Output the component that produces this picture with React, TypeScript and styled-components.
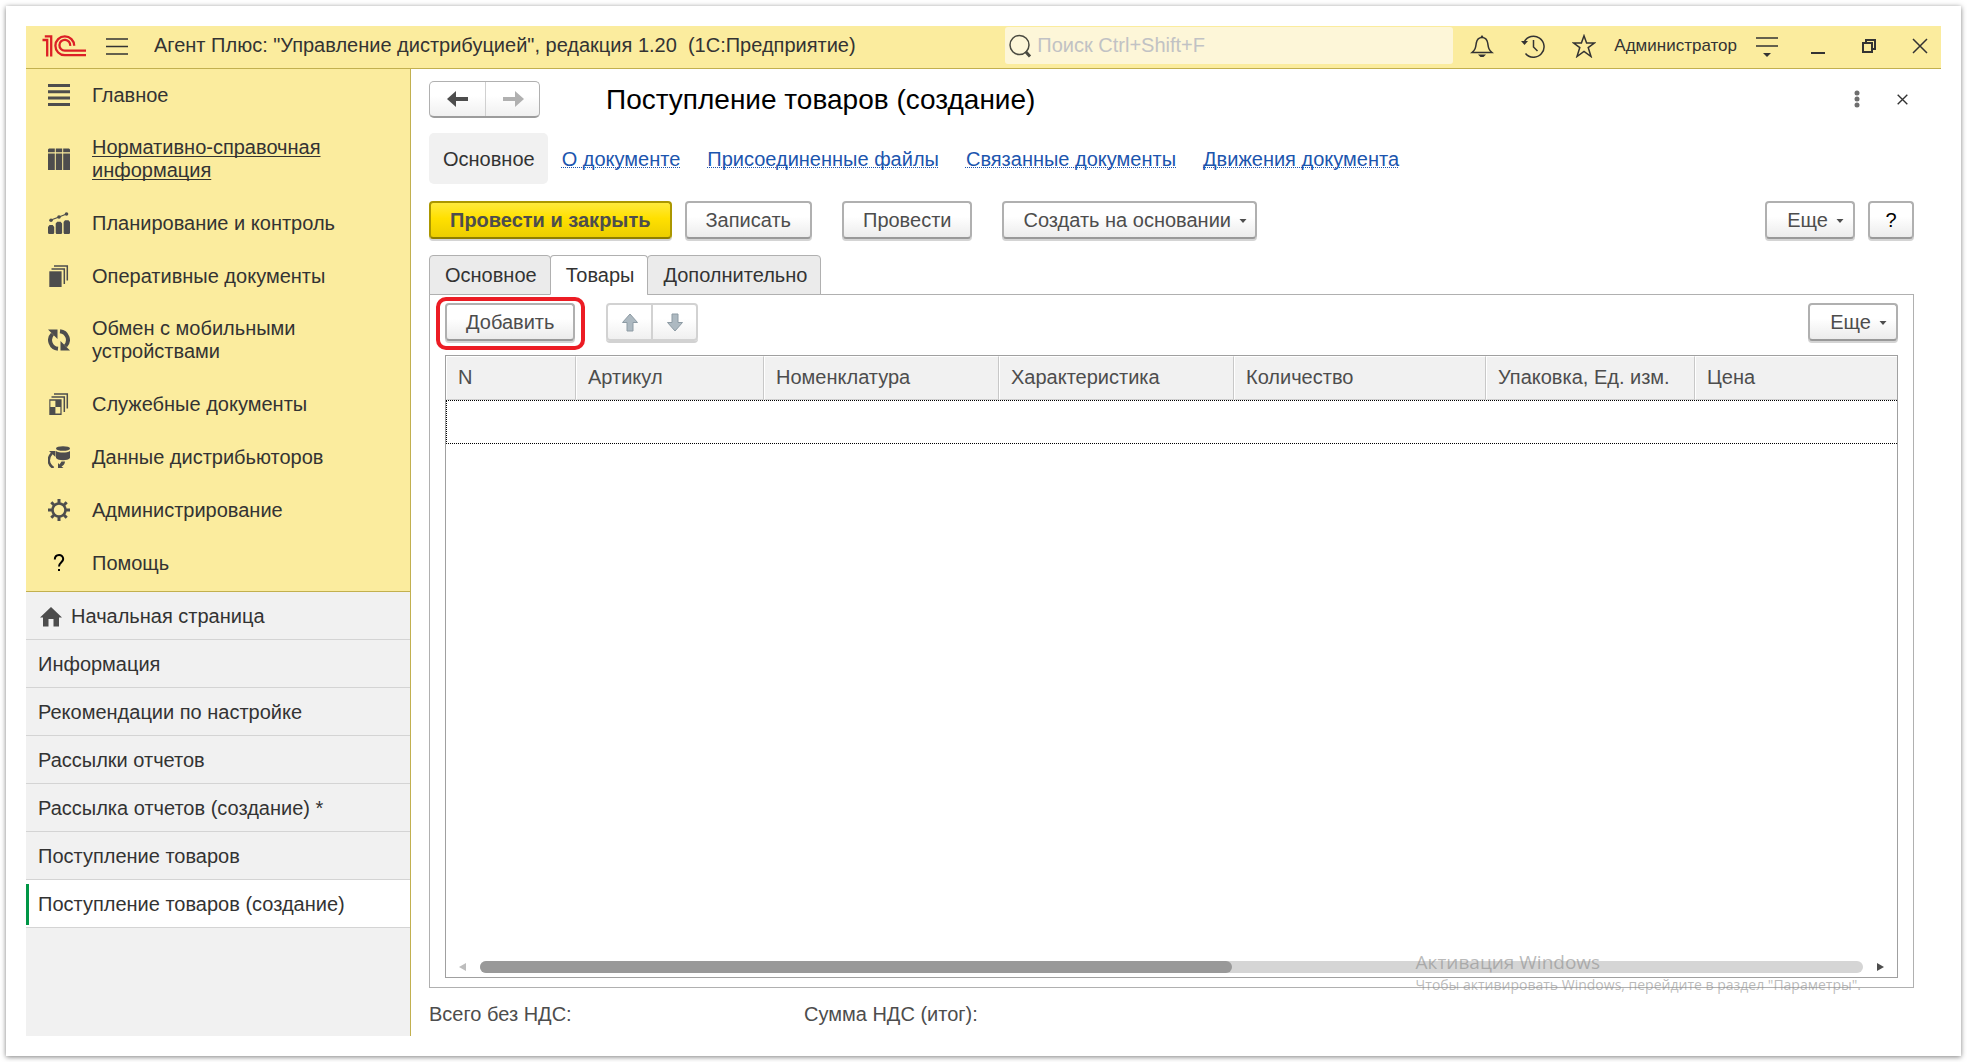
import React from "react";
import styled, { createGlobalStyle, css } from "styled-components";

const ink = "#333333";
const soft = "#4d4d4d";
const yellow = "#fbec9e";
const yellowLine = "#c2b04f";
const grey = "#f1f1f1";

const GlobalStyle = createGlobalStyle`
  *, *::before, *::after { box-sizing: border-box; }
  body {
    margin: 0;
    background: #fff;
    color: ${ink};
    font: 20px/23px "Liberation Sans", Arial, sans-serif;
  }
  button, input { font: inherit; color: inherit; }
  button { cursor: pointer; }
`;

const Page = styled.div`
  display: flex;
  min-height: 100vh;
  padding: 6px;
`;

const Sheet = styled.div`
  display: flex;
  flex: 1;
  flex-direction: column;
  min-width: 0;
  padding: 20px;
  background: #fff;
  box-shadow: 0 1px 5px rgba(0, 0, 0, 0.5);
`;

/* ---------- title bar ---------- */

const TitleBar = styled.header`
  display: flex;
  align-items: center;
  height: 43px;
  padding: 0 0 3px 16px;
  background: ${yellow};
  border-bottom: 1px solid ${yellowLine};
`;

const BarButton = styled.button`
  display: flex;
  align-items: center;
  justify-content: center;
  width: 42px;
  height: 38px;
  padding: 0;
  border: 0;
  background: none;
`;

const AppTitle = styled.div`
  flex: 1;
  min-width: 0;
  margin-left: 16px;
  overflow: hidden;
  white-space: nowrap;
  text-overflow: ellipsis;
`;

const Search = styled.label`
  display: flex;
  align-items: center;
  flex: 0 1 448px;
  height: 37px;
  padding-left: 4px;
  gap: 4px;
  border-radius: 3px;
  background: #fdf6d8;
`;

const SearchInput = styled.input`
  flex: 1;
  min-width: 0;
  padding: 0;
  border: 0;
  outline: 0;
  background: none;
  &::placeholder { color: #c1c2c4; opacity: 1; }
`;

const BarTools = styled.div`
  display: flex;
  align-items: center;
  gap: 9px;
  margin-left: 8px;
`;

const UserName = styled.span`
  font-size: 17px;
`;

/* ---------- side panel ---------- */

const Body = styled.div`
  display: flex;
  flex: 1;
`;

const Side = styled.aside`
  display: flex;
  flex: none;
  flex-direction: column;
  width: 385px;
  background: ${grey};
  border-right: 1px solid ${yellowLine};
`;

const Sections = styled.nav`
  padding-bottom: 1px;
  background: ${yellow};
  border-bottom: 1px solid ${yellowLine};
`;

const SectionLink = styled.a<{ $hovered?: boolean }>`
  display: flex;
  align-items: center;
  gap: 22px;
  min-height: 53px;
  padding: 14px 60px 15px 22px;
  color: ${ink};
  text-decoration: ${(p) => (p.$hovered ? "underline" : "none")};
  text-decoration-thickness: 1px;
  text-underline-offset: 2px;
  text-decoration-skip-ink: none;
  svg { flex: none; }
`;

const OpenWindow = styled.a<{ $active?: boolean; $home?: boolean }>`
  display: flex;
  align-items: center;
  height: 48px;
  gap: 9px;
  padding: 2px 0 0 ${(p) => (p.$home ? 14 : 12)}px;
  border-bottom: 1px solid #d4d4d4;
  color: ${ink};
  text-decoration: none;
  ${(p) =>
    p.$active &&
    css`
      padding-left: 0;
      background: #fff;
      &::before {
        content: "";
        width: 3px;
        height: 41px;
        background: #009646;
      }
    `}
`;

/* ---------- form ---------- */

const Form = styled.main`
  display: flex;
  flex: 1;
  flex-direction: column;
  min-width: 0;
  padding: 12px 27px 0 18px;
`;

const FormHead = styled.div`
  display: flex;
  align-items: center;
  height: 36px;
`;

const History = styled.div`
  display: flex;
  height: 37px;
  border: 1px solid #b0b0b0;
  border-bottom: 2px solid #9c9c9c;
  border-radius: 5px;
  background: linear-gradient(#fff 40%, #f0f0f0);
`;

const HistoryButton = styled.button`
  display: flex;
  align-items: center;
  justify-content: center;
  width: 55px;
  padding: 0;
  border: 0;
  background: none;
  & + & {
    width: 54px;
    border-left: 1px solid #d0d0d0;
  }
`;

const FormTitle = styled.h1`
  flex: 1;
  margin: 0 0 0 66px;
  padding-top: 2px;
  color: #000;
  font-size: 28px;
  line-height: 36px;
  font-weight: 400;
`;

const GhostButton = styled.button`
  display: flex;
  align-items: center;
  justify-content: center;
  width: 24px;
  height: 36px;
  padding: 0;
  border: 0;
  background: none;
`;

const HeadTools = styled.div`
  display: flex;
  gap: 21px;
`;

const Pages = styled.nav`
  display: flex;
  align-items: center;
  height: 51px;
  margin-top: 16px;
`;

const PageLink = styled.a<{ $current?: boolean }>`
  display: flex;
  align-items: center;
  height: 51px;
  padding: 2px 13px 0 14px;
  white-space: nowrap;
  ${(p) =>
    p.$current
      ? css`
          border-radius: 5px;
          background: ${grey};
          color: ${ink};
          text-decoration: none;
        `
      : css`
          color: #1c55ae;
          text-decoration: underline dotted 1px;
          text-underline-offset: 1px;
          text-decoration-skip-ink: none;
        `}
`;

const Commands = styled.div`
  display: flex;
  align-items: center;
  margin-top: 17px;
`;

const Gap = styled.div<{ $w: number }>`
  flex: 0 0 ${(p) => p.$w}px;
`;

const Spring = styled.div`
  flex: 1;
`;

const Button = styled.button<{ $primary?: boolean; $menu?: boolean; $narrow?: boolean }>`
  display: flex;
  align-items: center;
  justify-content: center;
  min-width: ${(p) => (p.$narrow ? 46 : 90)}px;
  height: 38px;
  gap: 8px;
  padding: ${(p) => (p.$narrow ? "0" : p.$menu ? "0 8px 0 19px" : "0 19px")};
  border: 2px solid #b0b0b0;
  border-bottom-color: #999;
  border-radius: 4px;
  background: linear-gradient(#fff 40%, #ececec);
  box-shadow: 0 2px 0 #d4d4d4;
  color: ${(p) => (p.$narrow ? "#000" : soft)};
  white-space: nowrap;
  ${(p) =>
    p.$primary &&
    css`
      border-color: #ab9700;
      border-bottom-color: #8f7e00;
      background: linear-gradient(#ffea3c, #ffe000 45%, #ecce00);
      font-weight: 700;
    `}
`;

const Tabs = styled.div`
  display: flex;
  margin-top: 16px;
`;

const Tab = styled.button<{ $active?: boolean }>`
  height: 40px;
  margin: 0 -1px -1px 0;
  padding: 0 13px 0 15px;
  border: 1px solid #b0b0b0;
  border-bottom-color: ${(p) => (p.$active ? "#fff" : "#b0b0b0")};
  border-radius: 4px 4px 0 0;
  background: ${(p) => (p.$active ? "#fff" : "#ebebeb")};
  color: ${ink};
  z-index: 1;
`;

const TabPanel = styled.section`
  display: flex;
  flex: 1;
  flex-direction: column;
  padding: 8px 15px 9px;
  border: 1px solid #b0b0b0;
`;

const ListBar = styled.div`
  display: flex;
  align-items: flex-start;
  height: 52px;
`;

const Marked = styled.div`
  position: relative;
  &::after {
    content: "";
    position: absolute;
    inset: -6px -10px -9px -9px;
    border: 4px solid #ec1c24;
    border-radius: 10px;
    pointer-events: none;
  }
`;

const MoveGroup = styled.div`
  display: flex;
  height: 38px;
  border: 2px solid #d2d2d2;
  border-radius: 4px;
  background: linear-gradient(#fff 40%, #f0f0f0);
  box-shadow: 0 2px 0 #d2d2d2;
`;

const MoveButton = styled.button`
  display: flex;
  align-items: center;
  justify-content: center;
  width: 43px;
  padding: 0;
  border: 0;
  background: none;
  & + & {
    width: 45px;
    border-left: 2px solid #d2d2d2;
  }
`;

const Grid = styled.div`
  display: flex;
  flex: 1;
  flex-direction: column;
  border: 1px solid #a0a0a0;
`;

const Table = styled.table`
  width: 100%;
  border-collapse: separate;
  border-spacing: 0;
  table-layout: fixed;
`;

const HeadCell = styled.th`
  height: 44px;
  padding: 0 0 2px 11px;
  overflow: hidden;
  border: 1px solid #fff;
  border-right: 1px solid #c8c8c8;
  border-bottom-color: #d0d0d0;
  background: ${grey};
  color: ${soft};
  font-weight: 400;
  text-align: left;
  white-space: nowrap;
  &:last-child { border-right: 0; }
`;

const FocusCell = styled.td`
  height: 44px;
  padding: 0;
  border: 1px dotted #000;
  border-right: 0;
`;

const ScrollRow = styled.div`
  display: flex;
  align-items: center;
  gap: 14px;
  height: 16px;
  margin-top: auto;
  padding: 0 13px 4px;
`;

const Track = styled.div`
  flex: 1;
  height: 12px;
  border-radius: 6px;
  background: #d5d5d5;
`;

const Thumb = styled.div`
  width: 54.4%;
  height: 12px;
  border-radius: 6px;
  background: #999;
`;

const Totals = styled.div`
  display: flex;
  align-items: center;
  height: 48px;
  padding-top: 5px;
  color: ${soft};
`;

const Total = styled.div`
  width: 375px;
`;

const Watermark = styled.div`
  position: absolute;
  right: 106px;
  bottom: 67px;
  color: rgba(140, 140, 140, 0.6);
  font-family: "Open Sans", "Noto Sans", sans-serif;
  font-size: 14px;
  line-height: 20px;
  white-space: nowrap;
  pointer-events: none;
`;

const WatermarkTitle = styled.div`
  font-size: 19px;
  line-height: 25px;
`;

/* ---------- icons ---------- */

const Logo = () => (
  <svg width="44" height="22" viewBox="0 0 44 22" fill="none" stroke="#dc1f26" strokeWidth="2.3">
    <path d="M0.5 5H5.2V21.4M2.8 1.4H9.2V21.4" />
    <path d="M32.2 10.8A9.4 9.4 0 1 0 22.8 20.2H44" />
    <path d="M28.2 10.8A5.4 5.4 0 1 0 22.8 15.6H44" />
  </svg>
);

const Burger = () => (
  <svg width="22" height="18" stroke={ink} strokeWidth="1.5">
    <path d="M0 2H22M0 9.5H22M0 17H22" />
  </svg>
);

const SearchIcon = () => (
  <svg width="24" height="24" fill="none" stroke="#4a4a40">
    <circle cx="10.5" cy="11" r="9.5" strokeWidth="1.5" />
    <path d="M16.5 17.5L21 22.5" strokeWidth="3" />
  </svg>
);

const Bell = () => (
  <svg width="24" height="24" fill="none" stroke={ink} strokeWidth="1.5">
    <path d="M2 18.5H22C18.5 15.5 18.5 14 17.7 9C17 5 15 3.5 12 3.5S7 5 6.3 9C5.5 14 5.5 15.5 2 18.5Z" />
    <path d="M8 20.5H16L13.5 23H10.5ZM10.5 3L12 1L13.5 3Z" fill={ink} stroke="none" />
  </svg>
);

const Clock = () => (
  <svg width="24" height="24" fill="none" stroke={ink} strokeWidth="1.5">
    <path d="M3.2 8A10.5 10.5 0 1 1 4.5 19.5" />
    <path d="M12.5 6V13L16.5 17" />
    <path d="M0 7H7L3.5 11Z" fill={ink} stroke="none" />
  </svg>
);

const Star = () => (
  <svg width="24" height="24" fill="none" stroke={ink} strokeWidth="1.5">
    <path d="M12 1.8L14.6 9H22.3L16.2 13.6L19 22.5L12 17.5L5 22.5L7.8 13.6L1.7 9H9.4Z" />
  </svg>
);

const ServiceMenu = () => (
  <svg width="22" height="22" stroke={ink} strokeWidth="1.5">
    <path d="M0 3H22M0 11H22" />
    <path d="M7 18H15L11 22Z" fill={ink} stroke="none" />
  </svg>
);

const Minimize = () => (
  <svg width="14" height="16">
    <path d="M0 15H14" stroke={ink} strokeWidth="2" />
  </svg>
);

const Restore = () => (
  <svg width="14" height="14" fill="none" stroke={ink} strokeWidth="2">
    <path d="M1 4H10V13H1ZM4 4V1H13V10H10" />
  </svg>
);

const Cross = ({ size }: { size: number }) => (
  <svg width={size} height={size} viewBox="0 0 16 16" stroke={ink} strokeWidth={size < 14 ? 2 : 1.5}>
    <path d="M1 1L15 15M15 1L1 15" />
  </svg>
);

const Dots = () => (
  <svg width="6" height="18" fill="#6e6e6e">
    <circle cx="3" cy="3" r="2.5" />
    <circle cx="3" cy="9" r="2.5" />
    <circle cx="3" cy="15" r="2.5" />
  </svg>
);

const Arrow = ({ right }: { right?: boolean }) => (
  <svg width="22" height="16" fill={right ? "#b0b0b0" : "#4d4d4d"}>
    <path
      d="M0 8L9 0V6H21V10H9V16Z"
      transform={right ? "matrix(-1 0 0 1 22 0)" : undefined}
    />
  </svg>
);

const MoveArrow = ({ down }: { down?: boolean }) => (
  <svg width="18" height="19" fill="#adb9c1" stroke="#8d9ba4">
    <path
      d="M9 1L16.5 9.5H12V18H6V9.5H1.5Z"
      transform={down ? "matrix(1 0 0 -1 0 19)" : undefined}
    />
  </svg>
);

const Caret = () => (
  <svg width="8" height="5" fill={soft}>
    <path d="M0.5 1H7.5L4 5Z" />
  </svg>
);

const Home = () => (
  <svg width="22" height="20" fill={soft}>
    <path d="M11 0L22 10.5H19V19.5H13.5V12H8.5V19.5H3V10.5H0Z" />
  </svg>
);

type IconKind =
  | "lines" | "books" | "chart" | "docs" | "sync" | "service" | "data" | "gear" | "help";

const SectionIcon = ({ kind }: { kind: IconKind }) => (
  <svg width="22" height="22" viewBox="0 0 22 22" fill={soft}>
    {kind === "lines" && <path d="M0 0H22V3H0ZM0 6.3H22V9.3H0ZM0 12.6H22V15.6H0ZM0 19H22V22H0Z" />}
    {kind === "books" && (
      <path d="M1 0.5H6.8V4.3H0V1.5ZM7.8 0.5H14.2V4.3H7.8ZM15.2 0.5H21L22 1.5V4.3H15.2ZM0 5.5H6.8V22H0ZM7.8 5.5H14.2V22H7.8ZM15.2 5.5H22V22H15.2Z" />
    )}
    {kind === "chart" && (
      <>
        <path d="M0 15L1.5 13H4.7L6.2 15V21L5.5 22H0.7L0 21ZM7.7 11.5L9.2 9.8H12.6L14.1 11.5V21L13.4 22H8.4L7.7 21ZM15.6 10L17 8.2H20.5L22 10V21L21.3 22H16.3L15.6 21Z" />
        <path d="M3 8L11 5L18.5 2" fill="none" stroke={soft} strokeWidth="1.2" />
        <circle cx="3" cy="8.3" r="1.8" />
        <circle cx="11" cy="5" r="1.8" />
        <circle cx="18.5" cy="2" r="1.8" />
      </>
    )}
    {(kind === "docs" || kind === "service") && (
      <>
        <path d="M6 1H19.3V15.5M3.5 4H16.3V19" fill="none" stroke={soft} strokeWidth="1.5" />
        {kind === "docs" ? (
          <path d="M1.3 6.3H13.6V22H1.3Z" />
        ) : (
          <path
            fillRule="evenodd"
            d="M1.3 6.3H13.6V22H1.3ZM2.4 7.8H7.4V14H2.4ZM7.4 14H12.4V20.5H7.4Z"
          />
        )}
      </>
    )}
    {kind === "sync" && (
      <>
        <path d="M10 19.8A8.8 8.8 0 0 1 4.5 5M12 2.2A8.8 8.8 0 0 1 17.5 17" fill="none" stroke={soft} strokeWidth="4" />
        <path d="M0 0.5H9.5V10ZM22 21.5H12.5V12Z" />
      </>
    )}
    {kind === "data" && (
      <>
        <ellipse cx="15" cy="2.5" rx="7" ry="2.3" />
        <path d="M8 5C11 7 19 7 22 5V12C20 15 10 15 8 12Z" />
        <path d="M5.5 22C-0.5 18 -0.5 12 4 7" fill="none" stroke={soft} strokeWidth="2.5" />
        <path d="M1 5H7.5V11ZM17 15.5C17 18 15 20 13.5 20.5L15.5 22H10V17L11.5 18.5L13.5 15.5Z" />
      </>
    )}
    {kind === "gear" && (
      <g fill="none" stroke={soft} strokeWidth="3">
        <circle cx="11" cy="11" r="6.5" strokeWidth="2.6" />
        <path d="M11 0V4M11 18V22M0 11H4M18 11H22" />
        <path d="M3.3 3.3L6 6M16 16L18.7 18.7M3.3 18.7L6 16M16 6L18.7 3.3" />
      </g>
    )}
    {kind === "help" && (
      <>
        <path d="M6.8 7.5C6.8 1.5 15.2 1.5 15.2 7C15.2 10 11 10.5 11 14.5" fill="none" stroke="#000" strokeWidth="2" />
        <path d="M10 17H12V19H10Z" fill="#000" />
      </>
    )}
  </svg>
);

/* ---------- data ---------- */

const sections: { kind: IconKind; label: string; hovered?: boolean }[] = [
  { kind: "lines", label: "Главное" },
  { kind: "books", label: "Нормативно-справочная информация", hovered: true },
  { kind: "chart", label: "Планирование и контроль" },
  { kind: "docs", label: "Оперативные документы" },
  { kind: "sync", label: "Обмен с мобильными устройствами" },
  { kind: "service", label: "Служебные документы" },
  { kind: "data", label: "Данные дистрибьюторов" },
  { kind: "gear", label: "Администрирование" },
  { kind: "help", label: "Помощь" },
];

const windows = [
  "Информация",
  "Рекомендации по настройке",
  "Рассылки отчетов",
  "Рассылка отчетов (создание) *",
  "Поступление товаров",
  "Поступление товаров (создание)",
];

const pages = [
  "Основное",
  "О документе",
  "Присоединенные файлы",
  "Связанные документы",
  "Движения документа",
];

const columns: { label: string; width?: number }[] = [
  { label: "N", width: 130 },
  { label: "Артикул", width: 188 },
  { label: "Номенклатура", width: 235 },
  { label: "Характеристика", width: 235 },
  { label: "Количество", width: 252 },
  { label: "Упаковка, Ед. изм.", width: 209 },
  { label: "Цена" },
];

export default function App() {
  return (
    <Page>
      <GlobalStyle />
      <Sheet>
        <TitleBar>
          <Logo />
          <Gap $w={10} />
          <BarButton aria-label="Главное меню"><Burger /></BarButton>
          <AppTitle>Агент Плюс: "Управление дистрибуцией", редакция 1.20&nbsp; (1С:Предприятие)</AppTitle>
          <Search>
            <SearchIcon />
            <SearchInput type="text" aria-label="Поиск" placeholder="Поиск Ctrl+Shift+F" />
          </Search>
          <BarTools>
            <BarButton aria-label="Уведомления"><Bell /></BarButton>
            <BarButton aria-label="История"><Clock /></BarButton>
            <BarButton aria-label="Избранное"><Star /></BarButton>
            <UserName>Администратор</UserName>
            <BarButton aria-label="Сервис"><ServiceMenu /></BarButton>
            <BarButton aria-label="Свернуть"><Minimize /></BarButton>
            <BarButton aria-label="Развернуть"><Restore /></BarButton>
            <BarButton aria-label="Закрыть программу"><Cross size={16} /></BarButton>
          </BarTools>
        </TitleBar>

        <Body>
          <Side>
            <Sections>
              {sections.map((s) => (
                <SectionLink key={s.label} href="#" $hovered={s.hovered}>
                  <SectionIcon kind={s.kind} />
                  <span>{s.label}</span>
                </SectionLink>
              ))}
            </Sections>
            <OpenWindow href="#" $home><Home />Начальная страница</OpenWindow>
            {windows.map((w, i) => (
              <OpenWindow key={w} href="#" $active={i === windows.length - 1}>{w}</OpenWindow>
            ))}
          </Side>

          <Form>
            <FormHead>
              <History>
                <HistoryButton aria-label="Назад"><Arrow /></HistoryButton>
                <HistoryButton aria-label="Вперед"><Arrow right /></HistoryButton>
              </History>
              <FormTitle>Поступление товаров (создание)</FormTitle>
              <HeadTools>
                <GhostButton aria-label="Дополнительные действия"><Dots /></GhostButton>
                <GhostButton aria-label="Закрыть"><Cross size={11} /></GhostButton>
              </HeadTools>
            </FormHead>

            <Pages>
              {pages.map((p, i) => (
                <PageLink key={p} href="#" $current={i === 0}>{p}</PageLink>
              ))}
            </Pages>

            <Commands>
              <Button $primary>Провести и закрыть</Button>
              <Gap $w={13} />
              <Button>Записать</Button>
              <Gap $w={30} />
              <Button>Провести</Button>
              <Gap $w={30} />
              <Button $menu>Создать на основании<Caret /></Button>
              <Spring />
              <Button $menu>Еще<Caret /></Button>
              <Gap $w={13} />
              <Button $narrow aria-label="Справка">?</Button>
            </Commands>

            <Tabs role="tablist">
              <Tab role="tab">Основное</Tab>
              <Tab role="tab" aria-selected $active>Товары</Tab>
              <Tab role="tab">Дополнительно</Tab>
            </Tabs>

            <TabPanel role="tabpanel">
              <ListBar>
                <Marked><Button>Добавить</Button></Marked>
                <Gap $w={31} />
                <MoveGroup>
                  <MoveButton aria-label="Переместить вверх"><MoveArrow /></MoveButton>
                  <MoveButton aria-label="Переместить вниз"><MoveArrow down /></MoveButton>
                </MoveGroup>
                <Spring />
                <Button $menu>Еще<Caret /></Button>
              </ListBar>

              <Grid>
                <Table>
                  <colgroup>
                    {columns.map((c) => <col key={c.label} width={c.width} />)}
                  </colgroup>
                  <thead>
                    <tr>{columns.map((c) => <HeadCell key={c.label} scope="col">{c.label}</HeadCell>)}</tr>
                  </thead>
                  <tbody>
                    <tr><FocusCell colSpan={columns.length} /></tr>
                  </tbody>
                </Table>
                <ScrollRow>
                  <svg width="7" height="8" fill="#bdbdbd"><path d="M7 0V8L0 4Z" /></svg>
                  <Track><Thumb /></Track>
                  <svg width="7" height="8" fill={soft}><path d="M0 0V8L7 4Z" /></svg>
                </ScrollRow>
              </Grid>
            </TabPanel>

            <Totals>
              <Total>Всего без НДС:</Total>
              <Total>Сумма НДС (итог):</Total>
            </Totals>
          </Form>
        </Body>
      </Sheet>

      <Watermark>
        <WatermarkTitle>Активация Windows</WatermarkTitle>
        Чтобы активировать Windows, перейдите в раздел "Параметры".
      </Watermark>
    </Page>
  );
}
